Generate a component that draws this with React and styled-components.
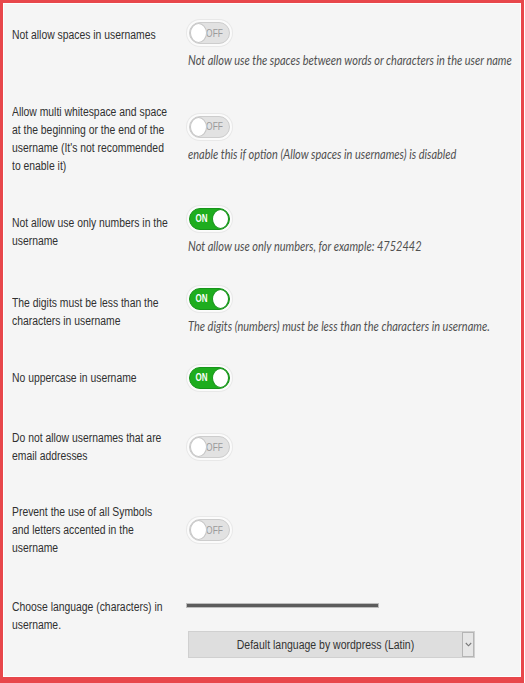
import React from "react";
import styled, { createGlobalStyle } from "styled-components";

const Global = createGlobalStyle`
  html, body { margin: 0; padding: 0; background: #ffffff; }
  * { box-sizing: border-box; }
`;

const Frame = styled.div`
  width: 524px;
  height: 683px;
  border: 3px solid #e8474b;
  border-bottom-width: 6px;
  background: #f5f5f5;
  box-shadow: inset 0 0 0 1px #ffffff;
  padding: 19px 0 0 9px;
  overflow: hidden;
`;

const Form = styled.div`
  display: flex;
  flex-direction: column;
  gap: 33px;
`;

const Row = styled.div`
  display: grid;
  grid-template-columns: 176px 1fr;
  align-items: ${(p) => (p.$top ? "start" : "center")};
  margin-top: ${(p) => p.$shift || 0}px;
`;

const LabelCell = styled.div`
  padding-top: ${(p) => p.$pt || 0}px;
`;

const LabelText = styled.div`
  width: 192px;
  font-family: "Liberation Sans", Arial, sans-serif;
  font-size: 12.5px;
  line-height: 18px;
  color: #303030;
  transform: scaleX(0.83);
  transform-origin: left center;
`;

const Control = styled.div`
  display: flex;
  flex-direction: column;
  align-items: flex-start;
  gap: 7px;
`;

const Desc = styled.div`
  font-family: "Lato", "Open Sans", sans-serif;
  font-style: italic;
  font-size: 13px;
  line-height: 18px;
  color: #505050;
  white-space: nowrap;
  transform: scaleX(0.846);
  transform-origin: left center;
`;

const Track = styled.div`
  position: relative;
  margin-left: 1px;
  width: 41px;
  height: 22px;
  border-radius: 11px;
  background: ${(p) => (p.$on ? "#1ead1e" : "#e2e2e2")};
  border: 1px solid ${(p) => (p.$on ? "#17951a" : "#cdcdcd")};
  box-shadow: 0 0 0 2px #fbfbfb, 0 0 0 3px #e8e8e8;
  display: flex;
  align-items: center;
  justify-content: ${(p) => (p.$on ? "flex-start" : "flex-end")};
`;

const TrackText = styled.span`
  font-family: "Liberation Sans", Arial, sans-serif;
  font-size: ${(p) => (p.$on ? "10px" : "10.5px")};
  font-weight: ${(p) => (p.$on ? "bold" : "normal")};
  line-height: 1;
  color: ${(p) => (p.$on ? "#ffffff" : "#9a9a9a")};
  margin: ${(p) => (p.$on ? "0 0 0 4px" : "0 4px 0 0")};
  transform: scaleX(0.8);
`;

const Knob = styled.span`
  position: absolute;
  top: 0;
  ${(p) => (p.$on ? "right: 0;" : "left: 0;")}
  width: 17px;
  height: 20px;
  border-radius: 50%;
  background: #ffffff;
  border: 1px solid ${(p) => (p.$on ? "#17951a" : "#c6c6c6")};
`;

const Toggle = ({ on }) => (
  <Track $on={on}>
    <TrackText $on={on}>{on ? "ON" : "OFF"}</TrackText>
    <Knob $on={on} />
  </Track>
);

const LangControl = styled.div`
  display: flex;
  flex-direction: column;
  align-items: flex-start;
  padding-top: 6px;
  gap: 24px;
`;

const Rule = styled.div`
  width: 191px;
  height: 3px;
  margin-left: -1px;
  background: #5c5c5c;
  box-shadow: 0 0 0 1px #bdbdbd;
`;

const Select = styled.div`
  width: 287px;
  height: 27px;
  background: #dedede;
  border: 1px solid #d0d0d0;
  display: flex;
  align-items: center;
`;

const SelectText = styled.span`
  flex: 1;
  text-align: center;
  font-family: "Liberation Sans", Arial, sans-serif;
  font-size: 12.5px;
  color: #333333;
  transform: scaleX(0.84);
`;

const Arrow = styled.span`
  width: 12px;
  align-self: stretch;
  border: 1px solid #b5b5b5;
  background: #e6e6e6;
  display: flex;
  align-items: center;
  justify-content: center;
`;

const rows = [
  {
    label: "Not allow spaces in usernames",
    on: false,
    desc: "Not allow use the spaces between words or characters in the user name",
    top: true,
    pt: 4,
  },
  {
    label:
      "Allow multi whitespace and space at the beginning or the end of the username (It's not recommended to enable it)",
    on: false,
    desc: "enable this if option (Allow spaces in usernames) is disabled",
    shift: 1,
  },
  {
    label: "Not allow use only numbers in the username",
    on: true,
    desc: "Not allow use only numbers, for example: 4752442",
  },
  {
    label: "The digits must be less than the characters in username",
    on: true,
    desc: "The digits (numbers) must be less than the characters in username.",
  },
  { label: "No uppercase in username", on: true, shift: -1 },
  { label: "Do not allow usernames that are email addresses", on: false, shift: 7 },
  {
    label: "Prevent the use of all Symbols and letters accented in the username",
    on: false,
    shift: 5,
  },
];

export default function App() {
  return (
    <>
      <Global />
      <Frame>
        <Form>
          {rows.map((r, i) => (
            <Row key={i} $top={r.top} $shift={r.shift}>
              <LabelCell $pt={r.pt}>
                <LabelText>{r.label}</LabelText>
              </LabelCell>
              <Control>
                <Toggle on={r.on} />
                {r.desc && <Desc>{r.desc}</Desc>}
              </Control>
            </Row>
          ))}
          <Row $top $shift={8}>
            <LabelCell>
              <LabelText>Choose language (characters) in username.</LabelText>
            </LabelCell>
            <LangControl>
              <Rule />
              <Select>
                <SelectText>Default language by wordpress (Latin)</SelectText>
                <Arrow>
                  <svg width="7" height="5" viewBox="0 0 7 5">
                    <path d="M0.8 1 L3.5 3.8 L6.2 1" fill="none" stroke="#777" strokeWidth="1.1" />
                  </svg>
                </Arrow>
              </Select>
            </LangControl>
          </Row>
        </Form>
      </Frame>
    </>
  );
}
